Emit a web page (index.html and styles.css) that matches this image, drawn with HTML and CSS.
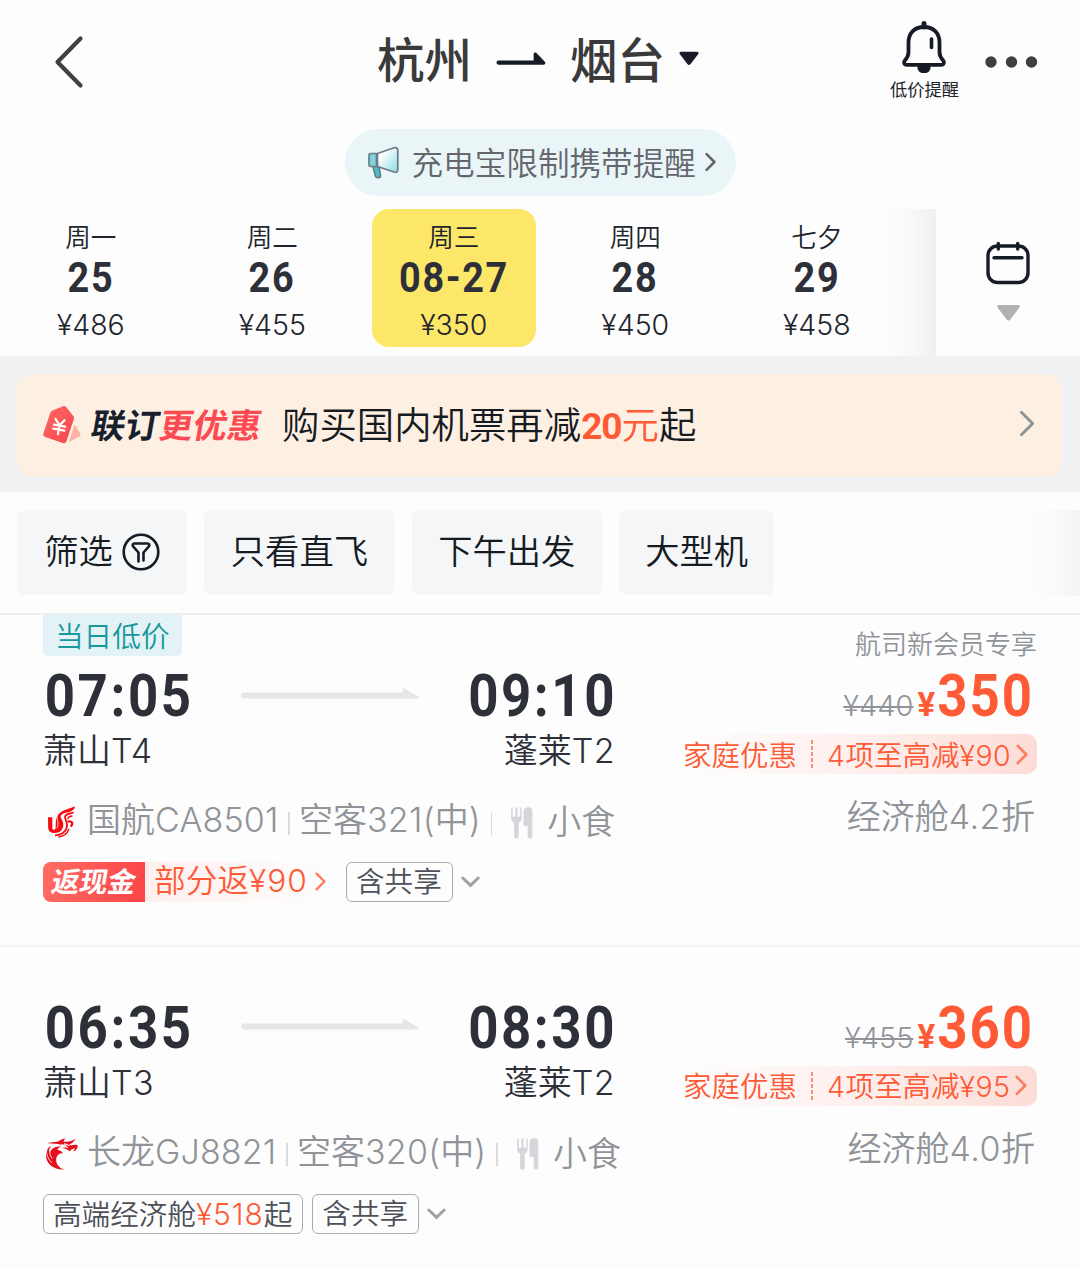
FILE: index.html
```html
<!DOCTYPE html>
<html lang="zh-CN">
<head>
<meta charset="utf-8">
<title>杭州 - 烟台</title>
<link rel="stylesheet" href="styles.css">
</head>
<body>
<svg class="defs" width="0" height="0">
  <defs>
    <linearGradient id="horn" x1="0" y1="0" x2="1" y2="1"><stop offset=".25" stop-color="#fff"/><stop offset="1" stop-color="#86dbe2"/></linearGradient>
    <linearGradient id="tagRed" x1="0" y1="0" x2="1" y2="1"><stop offset="0" stop-color="#ff6a62"/><stop offset="1" stop-color="#fb4450"/></linearGradient>
  </defs>
  <symbol id="chev-r" viewBox="0 0 14 24"><path d="M2 2l10 10L2 22" fill="none" stroke="currentColor" stroke-linecap="round" stroke-linejoin="round"/></symbol>
  <symbol id="chev-d" viewBox="0 0 19 12"><path d="M1.8 2l7.7 7.4L17.2 2" fill="none" stroke="currentColor" stroke-width="3" stroke-linecap="round"/></symbol>
  <symbol id="meal" viewBox="0 0 22 32">
    <path d="M.6 1.2v9.2c0 3 1.2 4.400 3 5.300V29.500c0 2.700 4.600 2.700 4.600 0V15.700c1.900-.900 3-2.300 3-5.300V1.200c0-1.100-1.500-1.100-1.500 0v8.600H7V1.200C7 0 4.900 0 4.900 1.200v8.600H2.200V1.200C2.200 0 .6 0 .6 1.200z"/>
    <path d="M13 17.500V4.500C13.200 1.200 15.600.300 18 .300c2.600 0 3.800 1.600 3.800 4v25.200c0 2.700-4.600 2.700-4.600 0V19H14.600C13.500 19 13 18.500 13 17.500z"/>
  </symbol>
  <symbol id="route" viewBox="0 0 178 12"><path d="M3 5.500h158.500V2.200c0-1.200.9-1.400 1.800-.700l13.800 7.800c1 .900.600 2.200-.900 2.200H3c-4 0-4-6 0-6z" fill="#e6e6e7"/></symbol>
</svg>

<header class="topbar">
  <svg class="back" width="30" height="54" viewBox="0 0 30 54"><path d="M26.500 3.500L3.500 27l23 23.500" fill="none" stroke="#404042" stroke-width="4.200" stroke-linecap="round" stroke-linejoin="round"/></svg>
  <h1 class="title">
    <span>杭州</span>
    <svg class="title-arrow" width="50" height="14" viewBox="0 0 50 14"><path d="M2.600 8.400h35V2c0-1.500 1.500-2 2.600-1.200L48.600 9.500c1.300 1.200.8 3.300-1.200 3.300H2.600c-2.800 0-2.800-4.400 0-4.400z" fill="#161b25"/></svg>
    <span>烟台</span>
    <svg class="title-caret" width="20" height="15" viewBox="0 0 20 15"><path d="M2 .800h16c1.500 0 2 1.400 1.100 2.500l-7.700 10c-.8 1-2 1-2.800 0L.9 3.300C0 2.200.5.800 2 .800z" fill="#161b25"/></svg>
  </h1>
  <div class="alert">
    <svg width="44" height="54" viewBox="0 0 44 54" fill="none" stroke="#161b25">
      <path d="M22 6C12 6 6.500 12.500 6.500 21.500V31c0 4.500-1.600 6.200-3.600 8.500-1.500 1.900-.8 4.300 1.900 4.300h34.400c2.700 0 3.400-2.400 1.900-4.300-2-2.300-3.600-4-3.600-8.500v-9.500C37.500 12.500 32 6 22 6z" stroke-width="3.800"/>
      <path d="M22 2.500V6" stroke-width="5" stroke-linecap="round"/>
      <path d="M29.500 18v8.500" stroke-width="3.600" stroke-linecap="round"/>
      <path d="M15.500 45h13v1.500c0 3-2.500 5.500-5 5.500h-3c-2.500 0-5-2.500-5-5.500z" fill="#161b25" stroke="none"/>
    </svg>
    <span>低价提醒</span>
  </div>
  <svg class="more" width="54" height="12" viewBox="0 0 54 12" fill="#3f3f41"><circle cx="6" cy="6" r="5.700"/><circle cx="26.500" cy="6" r="5.700"/><circle cx="46.500" cy="6" r="5.700"/></svg>
</header>

<div class="notice-row">
  <a class="notice">
    <svg width="32" height="34" viewBox="0 0 32 34" stroke="#6d7a85" stroke-width="1.700" stroke-linejoin="round">
      <path d="M5 20.500h6l1.500 9c.3 2.500-4.200 3.200-5 .500z" fill="#3fc3cb"/>
      <path d="M2.500 7.500h6v13h-6c-1 0-1.500-.5-1.500-1.500V9c0-1 .5-1.500 1.500-1.500z" fill="#7fd5dd"/>
      <path d="M9.500 7.500L26 1.800c2.300-.7 3.800.2 3.800 2.400v19.500c0 2.200-1.500 3-3.800 2.300L9.500 20.500z" fill="url(#horn)"/>
    </svg>
    <span>充电宝限制携带提醒</span>
    <svg class="notice-chev" width="11" height="20" stroke-width="3.200"><use href="#chev-r"/></svg>
  </a>
</div>

<nav class="dates">
  <div class="days">
    <div class="day"><span class="wk">周一</span><b class="num">25</b><span class="lat">¥486</span></div>
    <div class="day"><span class="wk">周二</span><b class="num">26</b><span class="lat">¥455</span></div>
    <div class="day on"><span class="wk">周三</span><b class="num">08-27</b><span class="lat">¥350</span></div>
    <div class="day"><span class="wk">周四</span><b class="num">28</b><span class="lat">¥450</span></div>
    <div class="day"><span class="wk">七夕</span><b class="num">29</b><span class="lat">¥458</span></div>
  </div>
  <div class="calendar">
    <svg width="46" height="44" viewBox="0 0 46 44" fill="none" stroke="#161b25" stroke-linecap="round"><rect x="3" y="5" width="40" height="36.500" rx="9.500" stroke-width="3.400"/><path d="M13.300 2.500v5.500M32.700 2.500v5.500" stroke-width="3.400"/><path d="M9 16.800h28" stroke-width="3.400"/></svg>
    <svg width="23" height="16" viewBox="0 0 23 16"><path d="M2 0h19c1.700 0 2.300 1.500 1.300 2.700l-9.200 12c-.9 1.200-2.300 1.200-3.200 0L.7 2.700C-.3 1.500.3 0 2 0z" fill="#b1b1b3"/></svg>
  </div>
</nav>

<section class="promo-band">
  <a class="promo">
    <svg width="38" height="40" viewBox="0 0 38 40">
      <path d="M31.500 19l6 10c.5 1-.1 2-1 2.500L26 37z" fill="#ffb3a4"/>
      <path d="M9.500 5.500L20 1.300c1.500-.6 2.300-.2 3.200.8l7 8.800c.8 1 1 2 .6 3.300L23.500 36c-.8 2-2 2.600-3.800 2L2.300 32C.6 31.400-.1 30.200.4 28.400L7.300 7.800c.4-1.200 1-1.800 2.200-2.300z" fill="url(#tagRed)"/>
      <path d="M12.500 14l4 6.200M21.500 15.200l-5 5M16.500 20.200L15 29M11 19.700l11 2M10.300 23.700l11 2" stroke="#fff" stroke-width="2.300" fill="none" stroke-linecap="round"/>
    </svg>
    <span class="slogan"><i>联订</i><i class="red">更优惠</i></span>
    <span class="promo-text">购买国内机票再减<em><b class="num">20</b>元</em>起</span>
    <svg class="promo-chev" width="16" height="27" stroke-width="2.600"><use href="#chev-r"/></svg>
  </a>
</section>

<section class="filters">
  <button class="chip chip-filter">筛选<svg width="38" height="38" viewBox="0 0 38 38" fill="none" stroke="#161b25" stroke-width="2.600" stroke-linejoin="round" stroke-linecap="round"><circle cx="19" cy="19" r="17.300"/><path d="M16.500 28.500V19.500l-5.200-5.800c-1.300-1.600-.6-3.200 1.200-3.200h13c1.800 0 2.500 1.600 1.200 3.200l-5.200 5.800v8"/></svg></button>
  <button class="chip">只看直飞</button>
  <button class="chip">下午出发</button>
  <button class="chip chip-s">大型机</button>
</section>

<main>
  <article class="flight">
    <div class="trip">
      <div class="slot"><span class="low">当日低价</span></div>
      <div class="times"><b class="num">07:05</b><svg width="178" height="12"><use href="#route"/></svg><b class="num end">09:10</b></div>
      <div class="ports"><span>萧山<span class="lat">T4</span></span><span>蓬莱<span class="lat">T2</span></span></div>
      <div class="info">
        <svg class="logo" width="30" height="34" viewBox="0 0 30 34" fill="none" stroke="#f40b10">
          <path d="M1 12.300h4.300v10.500c0 2.700 3.200 2.700 3.400 0C9 19 8 12 12.500 8.300 16.500 4.600 22 4.300 28 1.300 27.500 6 22.500 7 18 8c-4.500 1-5 3.500-3.500 6 1.800 3 2.500 6 1 9.500-1.800 4-7 5.500-11 4-3-1.200-3.300-3-3.300-5.500z" fill="#f40b10" stroke="none"/>
          <path d="M10.200 10.500c-1 3 2.600 8-.4 12.800" stroke="#fdfdfd" stroke-width=".8"/>
          <path d="M26.800 7.500c-5 1.300-9 1.600-8.800 4.500.3 3 3 5.500 1.800 10.500-1.200 5-6.300 8-11.800 7.800" stroke-width="1.800"/>
          <path d="M25.500 11c-3 .6-4.800.8-4.500 3" stroke-width="1.500"/>
          <path d="M20.500 16.800c4-1.800 6.500 2 3 4.700" stroke-width="2.200"/>
          <path d="M22 24c-1.500 4-5.500 7.500-10.500 7.900" stroke-width="1.500"/>
        </svg>
        <span class="carrier">国航<span class="lat">CA8501</span></span>
        <span class="sep"></span>
        <span class="plane">空客<span class="lat">321(</span>中<span class="lat">)</span></span>
        <span class="sep"></span>
        <svg class="meal" width="23" height="32"><use href="#meal"/></svg>
        <span class="snack">小食</span>
      </div>
      <div class="tags">
        <span class="cash"><i>返现金</i></span>
        <span class="back-amt">部分返<span class="lat">¥90</span><svg width="11" height="19" stroke-width="3"><use href="#chev-r"/></svg></span>
        <span class="box">含共享</span>
        <svg class="more-tags" width="19" height="12"><use href="#chev-d"/></svg>
      </div>
    </div>
    <div class="fare">
      <div class="member">航司新会员专享</div>
      <div class="price"><s class="lat">¥440</s><b class="yen">¥</b><b class="num">350</b></div>
      <div class="deal"><span>家庭优惠</span><i class="dash"></i><span><span class="lat">4</span>项至高减<span class="lat">¥90</span></span><svg width="12" height="21" stroke-width="3"><use href="#chev-r"/></svg></div>
      <div class="cabin">经济舱<span class="lat">4.2</span>折</div>
    </div>
  </article>

  <article class="flight">
    <div class="trip">
      <div class="slot"></div>
      <div class="times"><b class="num">06:35</b><svg width="178" height="12"><use href="#route"/></svg><b class="num end">08:30</b></div>
      <div class="ports"><span>萧山<span class="lat">T3</span></span><span>蓬莱<span class="lat">T2</span></span></div>
      <div class="info">
        <svg class="logo dragon" width="34" height="34" viewBox="0 0 34 34" fill="#e60f1e">
          <path d="M21 32.500C9 33 1.500 26.500 2 17.500c.3-4 2-7 5-9C5 12 5.500 14.500 6 16c1-4.500 5-7 11.500-6.500-3 .8-4 2-4 3.500 2 .2 4 1 5.500 3.200-6-.7-8.500 6-5.500 11.500 1.700 2.500 4 4.300 7.500 4.800z"/>
          <path d="M3.500 6.300C8 4.500 11 5.500 14 4.500c3-1.200 4-3 7.500-3-1 1-2 2-2 3 5 1 8-.5 12-2.700-1.500 3-4 5-6.500 5.800 2.500 1.800 5.500-.6 8.500.4.5 3.500-1.500 5.500-4 6.500 0-1.500.5-2 1.800-2.800-2.500-.4-4 .8-5.500 2.800-2-2.300-5-3.200-8.500-3.500 2-.7 4-.7 5.500-.5-2-2-6.500-4-19.300-4.200z"/>
          <path d="M17 8.200c2.500-.8 4.500 0 6.500 2.500M20 6.700c2 .2 3.500.8 5.500 2.200" fill="none" stroke="#fdfdfd" stroke-width="1.100"/>
          <path d="M2.700 12C2 17 4 22 8 26M6 11.500c-.7 3 0 7 2 10" fill="none" stroke="#fdfdfd" stroke-width=".8"/>
        </svg>
        <span class="carrier">长龙<span class="lat">GJ8821</span></span>
        <span class="sep"></span>
        <span class="plane">空客<span class="lat">320(</span>中<span class="lat">)</span></span>
        <span class="sep"></span>
        <svg class="meal" width="23" height="32"><use href="#meal"/></svg>
        <span class="snack">小食</span>
      </div>
      <div class="tags">
        <span class="box">高端经济舱<span class="lat hot">¥518</span>起</span>
        <span class="box next">含共享</span>
        <svg class="more-tags" width="19" height="12"><use href="#chev-d"/></svg>
      </div>
    </div>
    <div class="fare">
      <div class="member"></div>
      <div class="price"><s class="lat">¥455</s><b class="yen">¥</b><b class="num">360</b></div>
      <div class="deal"><span>家庭优惠</span><i class="dash"></i><span><span class="lat">4</span>项至高减<span class="lat">¥95</span></span><svg width="12" height="21" stroke-width="3"><use href="#chev-r"/></svg></div>
      <div class="cabin">经济舱<span class="lat">4.0</span>折</div>
    </div>
  </article>
</main>
</body>
</html>
```
FILE: styles.css
```css
* { box-sizing: border-box; }
body {
  margin: 0;
  width: 1080px;
  height: 1267px;
  overflow: hidden;
  background: #fdfdfd;
  color: #20242c;
  font-family: Inter, "Noto Sans CJK SC", sans-serif;
  font-weight: 350;
  white-space: nowrap;
}
svg { display: block; flex: none; }
.defs { position: absolute; }
.lat { font-weight: 300; letter-spacing: 0; }
.num { font-family: Roboto, sans-serif; font-weight: 700; display: inline-block; color: #2d3038; }

/* header */
.topbar { display: flex; height: 128.500px; }
.back { margin: 35px 0 0 54px; }
.title {
  margin: 0 0 0 293px;
  height: 114px;
  width: 324px;
  display: flex;
  align-items: center;
  font-size: 47.500px;
  font-weight: 500;
  color: #3a3a3b;
}
.title-arrow { margin: 4px 24px 0 24px; }
.title-caret { margin: 3px 0 0 14px; }
.alert {
  width: 70px;
  margin: 21px 0 0 188px;
  display: flex;
  flex-direction: column;
  align-items: center;
}
.alert svg { margin-left: -1px; }
.alert span { font-size: 17.300px; line-height: 20px; margin: 5px -1px 0 0; color: #20242c; font-weight: 400; }
.more { margin: 56px 0 0 26px; }

/* notice */
.notice-row { display: flex; justify-content: center; height: 80.500px; }
.notice {
  display: flex;
  align-items: center;
  width: 391px;
  height: 67px;
  padding: 2px 0 0 23px;
  border-radius: 34px;
  background: #eaf5f7;
  color: #63666c;
  font-size: 31.600px;
}
.notice span { margin: -5px 0 0 12px; }
.notice-chev { margin: -3px 0 0 9px; }

/* date strip */
.dates { display: flex; height: 147px; }
.days {
  display: flex;
  width: 936px;
  background: linear-gradient(to right, transparent 885px, #f9f9f9 910px, #f0f0f1 936px);
}
.day {
  width: 163.500px;
  margin: 0 9px;
  height: 138px;
  border-radius: 17px;
  display: flex;
  flex-direction: column;
  align-items: center;
}
.on { background: #fde769; }
.wk { font-size: 25.600px; line-height: 30px; margin-top: 14px; }
.day .num { font-size: 42px; line-height: 48px; margin-top: 1px; letter-spacing: 1.800px; transform: scaleX(.9); }
.day .lat { font-size: 28.500px; line-height: 36px; margin-top: 5px; letter-spacing: 0; }
.calendar { width: 144px; display: flex; flex-direction: column; align-items: center; padding-top: 32px; gap: 20px; }

/* banner */
.promo-band { height: 135.500px; background: #eff1f3; padding: 17.500px 18px 0 17px; }
.promo {
  display: flex;
  align-items: center;
  height: 103px;
  padding: 0 27px 0 26px;
  border-radius: 16px;
  background: #feefe3;
}
.slogan { display: flex; font-size: 34px; margin: -3px 0 0 11px; font-weight: 700; transform: skewX(-10deg); }
.slogan i { font-style: normal; color: #17202d; }
.slogan .red { color: #fc4a52; }
.promo-text { font-size: 37.400px; margin: -4px 0 0 20px; color: #161b22; }
.promo-text em { font-style: normal; color: #ff5a36; }
.promo-text .num { color: inherit; font-size: 37px; letter-spacing: -1px; }
.promo-chev { margin: -3px 0 0 auto; color: #8f9398; }

/* filters */
.filters {
  display: flex;
  gap: 17.400px;
  height: 123.500px;
  border-bottom: 2px solid #edeef1;
  padding: 18px 0 0 17px;
  background: linear-gradient(to right, transparent 1030px, #fafafa 1055px, #f3f3f4 1080px) 0 18px / 1080px 85.500px no-repeat;
}
.chip {
  width: 190px;
  height: 85.500px;
  border: 0;
  border-radius: 8px;
  background: #f4f6f8;
  color: #161b22;
  font: inherit;
  font-size: 34.300px;
  display: flex;
  align-items: center;
  justify-content: center;
  padding: 0 0 6px;
}
.chip-filter { width: 170px; gap: 9px; }
.chip-filter svg { margin-top: 5px; }
.chip-s { width: 155px; }

/* flight card */
.flight {
  height: 331.500px;
  border-bottom: 2px solid #f1f2f3;
  padding: 0 43px;
  display: flex;
  justify-content: space-between;
}
.trip { width: 578px; }
.slot { height: 41px; display: flex; }
.low { width: 138.500px; text-align: center; line-height: 44px; height: 41px; font-size: 28.700px; background: #e3f2f4; color: #17989f; border-radius: 0 0 5px 5px; }
.times { display: flex; align-items: center; justify-content: space-between; width: 571px; height: 79px; }
.times .num { font-size: 60px; line-height: 79px; letter-spacing: 2.900px; transform: scaleX(.88); transform-origin: left; width: 170px; padding-left: 2px; }
.times .num.end { transform-origin: right; text-align: right; width: 190px; margin-right: -3px; }
.times svg { margin: -6px 0 0 20px; }
.ports { display: flex; justify-content: space-between; width: 572px; font-size: 34px; line-height: 30px; padding-top: 1px; color: #2d3038; }
.ports .lat { letter-spacing: 0.010em; }
.info { display: flex; align-items: center; height: 40px; margin-top: 34px; font-size: 34px; color: #909499; }
.info > * { flex: none; }
.logo { margin: 4px 10px 0 4px; }
.dragon { margin: 4px 9px 0 1px; }
.carrier, .plane, .snack { line-height: 40px; }
.carrier .lat { letter-spacing: 0.005em; }
.plane .lat { letter-spacing: 0.008em; }
.sep { width: 1.500px; height: 23px; background: #d8dadd; margin: 6px 9px 0 10px; }
.meal { fill: #d4d6db; margin: 5px 0 0 9px; }
.snack { margin: 4px 0 0 14px; }
.tags { display: flex; align-items: center; height: 40px; margin-top: 22px; }
.cash {
  width: 102px;
  line-height: 40px;
  text-align: center;
  color: #fff;
  font-size: 28px;
  font-weight: 700;
  border-radius: 8px 0 0 8px;
  background: linear-gradient(100deg, #ff6c63, #fc4449);
}
.cash i { display: inline-block; font-style: normal; transform: skewX(-10deg); }
.back-amt {
  width: 184px;
  line-height: 38px;
  height: 40px;
  padding: 0 0 2px 9px;
  display: flex;
  align-items: center;
  font-size: 31.700px;
  color: #ff5a36;
  background: linear-gradient(to right, #fff0ee, #fdfdfd);
}
.back-amt .lat { letter-spacing: 0.030em; }
.back-amt svg { margin-left: 7px; opacity: .8; }
.box { border: 1.500px solid #a9abae; border-radius: 6px; height: 40px; line-height: 38px; padding: 0 10px 0 9px; font-size: 28.600px; color: #4d5159; }
.cash ~ .box { margin-left: 17px; }
.next { margin-left: 9px; }
.hot { color: #ff5a36; font-size: 30px; font-weight: 350; letter-spacing: 0.030em; }
.more-tags { margin-left: 8px; color: #9fa1a5; }

.fare { width: 354px; display: flex; flex-direction: column; align-items: flex-end; }
.member { font-size: 26px; line-height: 30px; height: 30px; margin: 15px 0 0; color: #909499; }
.price { display: flex; align-items: baseline; height: 74px; line-height: 72px; color: #ff5a36; padding-right: 3px; }
.price s { color: #909499; font-size: 29px; margin-right: 4px; text-decoration-thickness: 2px; }
.yen { font-family: Roboto, sans-serif; font-weight: 700; font-size: 33px; }
.price .num { font-size: 60px; color: inherit; letter-spacing: 2.200px; transform: scaleX(.88); transform-origin: right; margin-left: -11px; }
.deal {
  display: flex;
  align-items: center;
  width: 354px;
  height: 40px;
  color: #ff5a36;
  font-size: 28.500px;
  border-radius: 0 10px 10px 0;
  background: linear-gradient(to right, #fdfdfd, #feeeeb 55%, #fcdcd7);
}
.deal span { margin-top: -2px; }
.deal .lat { letter-spacing: 0.018em; }
.dash { width: 2px; height: 28px; margin: 0 14px; background: repeating-linear-gradient(#ff8f78 0 4px, transparent 4px 6px); }
.deal svg { margin-left: 5px; opacity: .75; }
.cabin { font-size: 34px; line-height: 40px; margin: 23px 2px 0 0; color: #909499; }
.cabin .lat { letter-spacing: 0.015em; }
```
